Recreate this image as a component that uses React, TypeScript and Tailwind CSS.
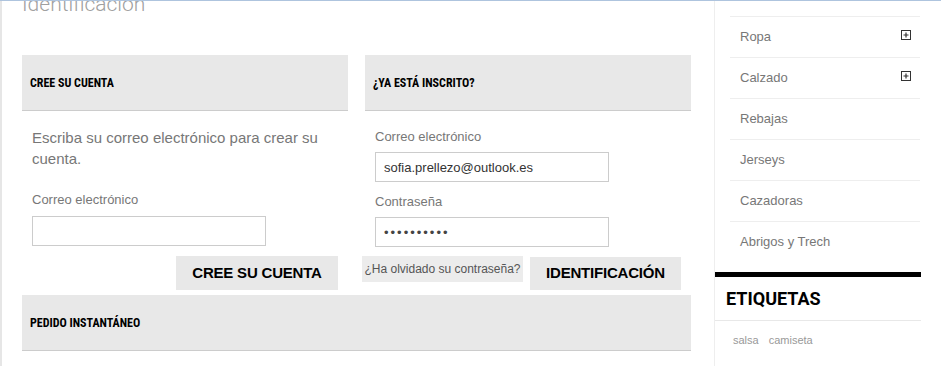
import React from "react";

const cond = "font-['Liberation_Sans_Narrow','Roboto_Condensed',Roboto,sans-serif]";
const sans = "font-['Liberation_Sans',Arial,sans-serif]";

const SectionHeader = ({ title, className = "" }: { title: string; className?: string }) => (
  <div className={`flex h-[56px] items-center border-b border-[#cccccc] bg-[#e8e8e8] px-2 ${className}`}>
    <h3 className={`${cond} text-[12px] font-bold text-black`}>{title}</h3>
  </div>
);

const PlusBox = () => (
  <svg width="10" height="10" viewBox="0 0 10 10" className="mt-[-4px]">
    <rect x="0.5" y="0.5" width="9" height="9" fill="none" stroke="#333" />
    <path d="M2.5 5h5M5 2.5v5" stroke="#333" strokeWidth="1.2" />
  </svg>
);

const categories = [
  { name: "Ropa", plus: true },
  { name: "Calzado", plus: true },
  { name: "Rebajas" },
  { name: "Jerseys" },
  { name: "Cazadoras" },
  { name: "Abrigos y Trech" },
];

export default function App() {
  return (
    <div className={`${sans} h-[366px] w-[941px] overflow-hidden border-t border-[#aec4de] bg-white`}>
      <div className="flex h-[365px]">
        {/* main column */}
        <div className="w-[714px] border-l-2 border-[#e6e6e6] pl-5 pr-[23px]">
          <div className="h-[14px] overflow-hidden">
            <h1 className="mt-[-7px] font-['Roboto',sans-serif] text-[21px] font-light leading-[21px] text-[#a0a0a0]">
              Identificación
            </h1>
          </div>

          <div className="mt-[40px] flex gap-[17px]">
            {/* create account */}
            <div className="w-[326px]">
              <SectionHeader title="CREE SU CUENTA" />
              <div className="pl-[10px] pr-[10px]">
                <p className="mt-[16px] w-[290px] text-[15px] leading-[21px] text-[#777]">
                  Escriba su correo electrónico para crear su cuenta.
                </p>
                <label className="mt-[23px] block text-[13px] leading-[16px] text-[#777]">Correo electrónico</label>
                <input
                  className="mt-[8px] block h-[30px] w-[234px] border border-[#cccccc] bg-white px-2 text-[13px] outline-none"
                  defaultValue=""
                />
                <div className="mt-[10px] flex justify-end">
                  <button className="h-[34px] w-[162px] bg-[#e8e8e8] text-[15px] font-bold tracking-[-0.2px] text-black">
                    CREE SU CUENTA
                  </button>
                </div>
              </div>
            </div>

            {/* login */}
            <div className="w-[326px]">
              <SectionHeader title="¿YA ESTÁ INSCRITO?" />
              <div className="pl-[10px] pr-[10px]">
                <label className="mt-[18px] block text-[13px] leading-[16px] text-[#777]">Correo electrónico</label>
                <input
                  className="mt-[7px] block h-[30px] w-[234px] border border-[#cccccc] bg-white px-2 text-[13px] text-[#333] outline-none"
                  defaultValue="sofia.prellezo@outlook.es"
                />
                <label className="mt-[12px] block text-[13px] leading-[16px] text-[#777]">Contraseña</label>
                <input
                  type="password"
                  className="mt-[7px] block h-[30px] w-[234px] border border-[#cccccc] bg-white px-2 text-[13px] tracking-[2px] text-[#444] outline-none"
                  defaultValue="contrasena"
                />
                <div className="-ml-[13px] mt-[9px] flex items-start gap-[7px]">
                  <a className="flex h-[26px] w-[161px] items-center justify-center bg-[#ececec] text-[12px] text-[#555]">
                    ¿Ha olvidado su contraseña?
                  </a>
                  <button className="mt-[1px] h-[33px] w-[151px] bg-[#e8e8e8] text-[15px] font-bold tracking-[-0.2px] text-black">
                    IDENTIFICACIÓN
                  </button>
                </div>
              </div>
            </div>
          </div>

          <SectionHeader title="PEDIDO INSTANTÁNEO" className="mt-[5px]" />
        </div>

        {/* sidebar */}
        <aside className="w-[227px] border-l border-[#eeeeee]">
          <ul className="ml-[15px] mt-[15px] w-[190px]">
            {categories.map((c) => (
              <li
                key={c.name}
                className="flex h-[41px] items-center justify-between border-t border-[#eeeeee] pl-[10px] pr-[9px] text-[13px] text-[#777]"
              >
                <span>{c.name}</span>
                {c.plus && <PlusBox />}
              </li>
            ))}
          </ul>
          <div className="mt-[10px] w-[206px] border-t-[5px] border-black">
            <h2 className="flex h-[44px] items-center border-b border-[#e8e8e8] pl-[11px] font-['Roboto',sans-serif] text-[18px] font-bold text-black">
              ETIQUETAS
            </h2>
            <div className="flex gap-[10px] pl-[18px] pt-[11px] text-[11px] text-[#999]">
              <span>salsa</span>
              <span>camiseta</span>
            </div>
          </div>
        </aside>
      </div>
    </div>
  );
}
